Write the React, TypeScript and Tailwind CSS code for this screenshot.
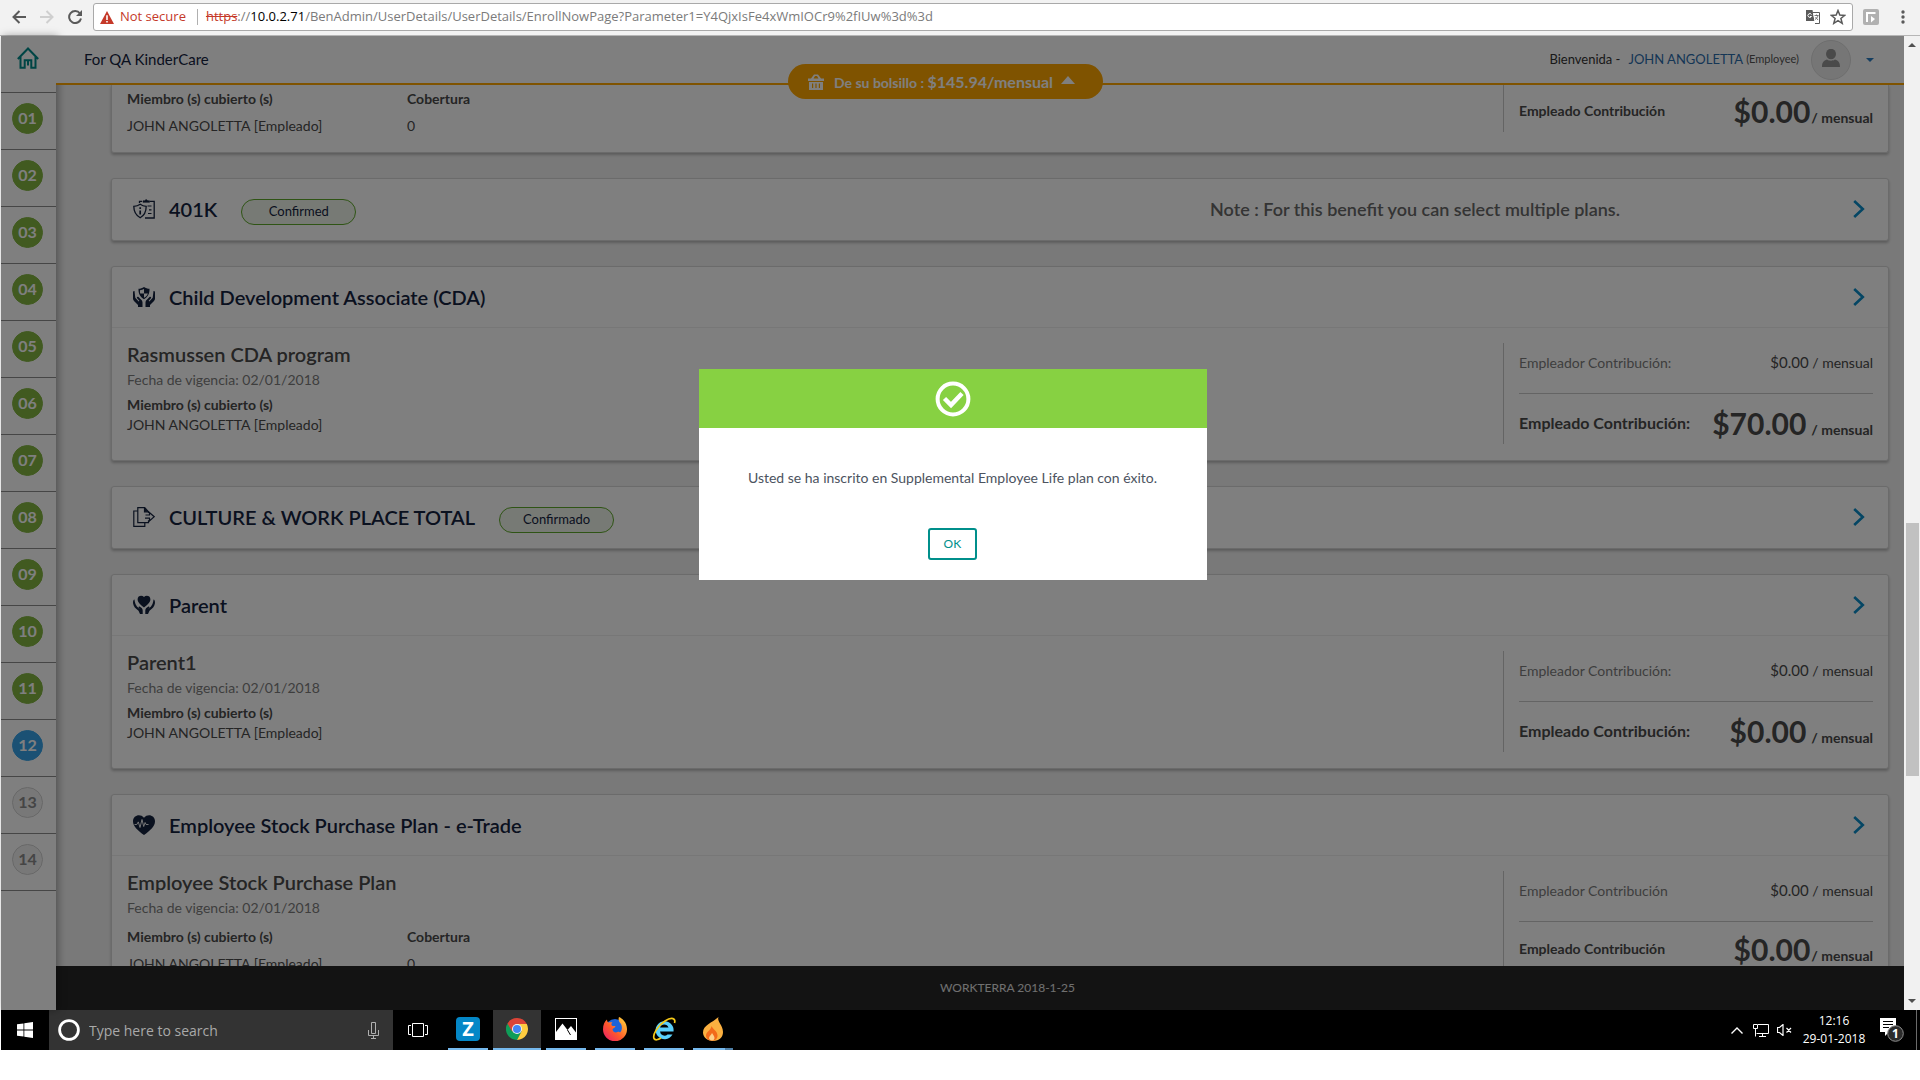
import React from "react";
import type { ReactNode } from "react";

type IconProps = { className?: string };

/* ---------- benefit icons ---------- */

function ClipboardShieldIcon({ className }: IconProps) {
  return (
    <svg viewBox="0 0 22 20" className={className} fill="none" stroke="currentColor" aria-hidden="true">
      <path d="M6.500 4V2.300H9M17 2.300h4.200v16.700H12" strokeWidth="1.300" />
      <path d="M10 1.800h1.500L13.200.4l1.700 1.400h1.600v1.500H10z" fill="currentColor" strokeWidth=".6" />
      <path d="M14.500 7h4M16 10.800h2.500M15 14.500h3.500" strokeWidth="1.200" />
      <path d="M7.200 5.300c2 1.500 4 2 6 2 0 5-1.500 9-6 11.400C2.700 16.300.8 12.300.8 7.300c2.500 0 4.400-.5 6.400-2z" strokeWidth="1.300" />
      <path d="M7.200 8.300v1.700M7.200 11.500v4" strokeWidth="1.700" />
    </svg>
  );
}

function ShieldHandsIcon({ className }: IconProps) {
  return (
    <svg viewBox="0 0 22 20" className={className} fill="currentColor" aria-hidden="true">
      <path d="M11 0c1.800 1.200 3.500 1.700 5.500 1.800.2 4.500-1.400 8.200-5.500 10.400C6.900 10 5.300 6.300 5.500 1.800 7.500 1.700 9.200 1.200 11 0z" />
      <path d="M11 2v4.500H7.200C7 5.500 6.900 4.300 7 3.200 8.500 3.100 9.800 2.700 11 2zM11 6.500h3.900c-.6 1.900-1.900 3.300-3.900 4.300z" fill="#fff" />
      <path d="M1.500 4C.4 3.900 0 4.600 0 5.500v6c0 1 .3 1.600 1 2.400L5 18v2h4.500v-4.500c0-1.300-.5-2-1.300-2.800L5.500 10c-1-.9-2.200.2-1.400 1.200l2.200 2.600-.6.6-3.400-3.600z" />
      <path d="M20.500 4c1.100-.1 1.500.6 1.500 1.500v6c0 1-.3 1.600-1 2.400L17 18v2h-4.500v-4.500c0-1.300.5-2 1.300-2.800l2.700-2.700c1-.9 2.200.2 1.400 1.200l-2.200 2.600.6.6 3.400-3.600z" />
    </svg>
  );
}

function HeartHandsIcon({ className }: IconProps) {
  return (
    <svg viewBox="0 0 22 20" className={className} fill="currentColor" aria-hidden="true">
      <path d="M11 12.500C7.500 9.800 4.600 7.500 4.600 4.300 4.600.6 9 0 11 2 13 0 17.400.6 17.400 4.300c0 3.200-2.900 5.500-6.400 8.200z" />
      <path d="M1.500 4.500C.2 4.800-.1 6.500.1 8.500c.4 3 2.400 5 5.400 7.300l1.500 3.200h2.700v-3.500c0-2-1.200-3-2.800-3.800-1.200-.6-1.800.6-1 1.300l1 .9C3.800 12 2 9.500 1.500 4.500z" />
      <path d="M20.500 4.500c1.300.3 1.600 2 1.400 4-.4 3-2.400 5-5.400 7.300L15 19h-2.700v-3.500c0-2 1.200-3 2.800-3.800 1.200-.6 1.800.6 1 1.300l-1 .9c3.100-1.900 4.900-4.400 5.400-9.400z" />
    </svg>
  );
}

function DocumentExportIcon({ className }: IconProps) {
  return (
    <svg viewBox="0 0 22 20" className={className} fill="none" stroke="currentColor" strokeWidth="1.200" aria-hidden="true">
      <path d="M15.500 6V4.700L11.700.7H4.800v15h10.700v-2.500" />
      <path d="M11.500.8v4h4" fill="currentColor" />
      <path d="M4.800 4H.8v15.300h11v-3.600" />
      <path d="M15 8h1.500V5.500l4.700 4.200-4.700 4.300v-2.800H12M12.500 8H15" />
    </svg>
  );
}

function HeartPulseIcon({ className }: IconProps) {
  return (
    <svg viewBox="0 0 22 20" className={className} aria-hidden="true">
      <path d="M11 20C5 15.500 0 11.500 0 6.200 0 0 7.500-1.800 11 2.700 14.500-1.800 22 0 22 6.200 22 11.500 17 15.500 11 20z" fill="currentColor" />
      <path d="M1.500 9.500h2.300l1.500-2.600 1.700 5.600 2-8 1.700 7 1.400-4 1 2h2.400" fill="none" stroke="#fff" strokeWidth=".9" />
    </svg>
  );
}

/* ---------- benefit cards ---------- */

function CardHeader({ icon, title, badge, note, divided }: { icon: ReactNode; title: string; badge?: string; note?: string; divided?: boolean }) {
  return (
    <header className={`flex h-[61px] items-center border-b pr-[23px] pl-[21px] ${divided ? "border-[#eeeeee]" : "border-transparent"}`}>
      <span className="text-[#15233f]">{icon}</span>
      <h2 className="ml-[14px] text-xl font-semibold text-[#15233f]">{title}</h2>
      {badge && (
        <span className="mt-[6px] ml-6 flex h-[26px] w-[115px] items-center justify-center rounded-full border border-[#5fa92a] bg-[#eef4ea] text-[13px] text-[#15233f]">
          {badge}
        </span>
      )}
      <span className="flex-1" />
      {note && <p className="mr-[233px] text-lg font-semibold text-[#686868]">{note}</p>}
      <button type="button" aria-label={`Open ${title}`} className="text-[#0a8cc8]">
        <svg viewBox="0 0 12 18" className="h-[18px] w-3" fill="none" stroke="currentColor" strokeWidth="2.600" aria-hidden="true">
          <path d="M1.200 1 9.800 9l-8.600 8" />
        </svg>
      </button>
    </header>
  );
}

const cardClass = "mb-[25px] rounded-[3px] border border-[#d6d6d6] bg-white shadow-[0_2px_3px_rgba(0,0,0,0.25)]";

function EmployeeRow({ label, amount, compact }: { label: string; amount: string; compact?: boolean }) {
  return (
    <div className={`flex h-[50px] items-center justify-between font-bold text-[#4a4a4a] ${compact ? "pt-1" : "pt-2"}`}>
      <span className={compact ? "text-sm" : "text-base"}>{label}</span>
      <span className={`flex items-baseline ${compact ? "gap-px" : "gap-[5px]"}`}>
        <span className="text-[30px] leading-9">{amount}</span>
        <span className="text-sm">/ mensual</span>
      </span>
    </div>
  );
}

function Contributions({ employer, amount, compact }: { employer: string; amount: string; compact?: boolean }) {
  return (
    <div className="mt-[15px] mb-1 w-[385px] shrink-0 self-start border-l border-[#c8c8c8] pr-[15px] pl-[15px]">
      <div className="flex h-[51px] items-center justify-between border-b border-[#c8c8c8] pb-[10px] text-sm">
        <span className="text-[#7d7d7d]">{compact ? "Empleador Contribución" : "Empleador Contribución:"}</span>
        <span className="text-[#4a4a4a]">
          <span className="text-[15px]">{employer}</span> / mensual
        </span>
      </div>
      <EmployeeRow label={compact ? "Empleado Contribución" : "Empleado Contribución:"} amount={amount} compact={compact} />
    </div>
  );
}

function MemberTable() {
  return (
    <table className="self-start text-left text-sm text-[#4a4a4a]">
      <thead>
        <tr className="h-[27px]">
          <th className="w-[280px] font-bold">Miembro (s) cubierto (s)</th>
          <th className="font-bold">Cobertura</th>
        </tr>
      </thead>
      <tbody>
        <tr className="h-[27px]">
          <td>JOHN ANGOLETTA [Empleado]</td>
          <td>0</td>
        </tr>
      </tbody>
    </table>
  );
}

function PlanCard({ icon, title, plan, amount, coverage }: { icon: ReactNode; title: string; plan: string; amount: string; coverage?: boolean }) {
  return (
    <section className={cardClass}>
      <CardHeader icon={icon} title={title} divided />
      <div className="flex justify-between pb-3 pl-[15px]">
        <div className="pt-3">
          <h3 className="text-xl leading-7 font-semibold text-[#4a4a4a]">{plan}</h3>
          <p className="text-sm leading-6 text-[#7d7d7d]">Fecha de vigencia: 02/01/2018</p>
          {coverage ? (
            <div className="mt-[3px]">
              <MemberTable />
            </div>
          ) : (
            <div className="mt-[3px] text-sm leading-5 text-[#4a4a4a]">
              <p className="font-bold">Miembro (s) cubierto (s)</p>
              <p>JOHN ANGOLETTA [Empleado]</p>
            </div>
          )}
        </div>
        <Contributions employer="$0.00" amount={amount} compact={coverage} />
      </div>
    </section>
  );
}

/* ---------- app chrome ---------- */

const steps = ["01", "02", "03", "04", "05", "06", "07", "08", "09", "10", "11", "12", "13", "14"];

function stepColors(n: number) {
  if (n < 12) return "border-[#82b441] bg-[#82b441] text-white";
  if (n === 12) return "border-[#36a3e8] bg-[#36a3e8] text-white";
  return "border-[#d0d0d0] bg-[#f1f1f1] text-[#8a8a8a]";
}

function Sidebar() {
  return (
    <nav aria-label="Pasos" className="z-10 w-[55px] shrink-0 bg-white shadow-[2px_0_8px_rgba(0,0,0,0.35)]">
      <a href="#home" aria-label="Inicio" className="flex h-[57px] items-center justify-center border-b border-[#8c8c8c] pr-[2px] pb-3">
        <svg viewBox="0 0 22 22" className="size-[22px] text-[#018a8a]" fill="none" stroke="currentColor" strokeWidth="2" aria-hidden="true">
          <path d="M.8 12 11 1.500 21.200 12M3.500 9.500v11.300h4.200v-7.500h6.600v7.500h4.200V9.500M11 13.500v5" />
        </svg>
      </a>
      {steps.map((step, i) => (
        <a key={step} href={`#step-${step}`} className="flex h-[57px] items-center justify-center border-b border-[#8c8c8c] pr-[2px] pb-[6px]">
          <span className={`flex size-[31px] items-center justify-center rounded-full border text-base font-bold ${stepColors(i + 1)}`}>{step}</span>
        </a>
      ))}
    </nav>
  );
}

function BasketIcon() {
  return (
    <svg viewBox="0 0 16 16" className="size-4" fill="currentColor" aria-hidden="true">
      <path d="M0 4.500h3L6 .5h4l3 4h3V7H0zM5.500 4.500h5L9 2H7z" fillRule="evenodd" />
      <path d="M1 8h14v8H1zM4 9.500v4.500h1.200V9.500zm3.400 0v4.500h1.200V9.500zm3.400 0v4.500H12V9.500z" fillRule="evenodd" />
    </svg>
  );
}

function Header() {
  return (
    <header className="relative z-10 flex h-[49px] shrink-0 items-center border-b-2 border-[#ffa600] bg-white pr-[30px] pl-7">
      <span className="flex-1 text-[15px] text-[#15233f]">For QA KinderCare</span>
      <button
        type="button"
        className="absolute top-7 right-[801px] flex h-[35px] w-[315px] items-center rounded-full bg-[#ffa600] pl-5 text-white"
      >
        <BasketIcon />
        <span className="ml-[10px] text-sm font-bold">
          De su bolsillo : <span className="text-base">$145.94/mensual</span>
        </span>
        <svg viewBox="0 0 14 8" className="mb-1 ml-2 h-2 w-[14px]" fill="currentColor" aria-hidden="true">
          <path d="M7 0l7 8H0z" />
        </svg>
      </button>
      <span className="text-[13px] text-[#333333]">Bienvenida -</span>
      <a href="#profile" className="ml-2 text-[13px] text-[#2b6cab]">
        JOHN ANGOLETTA
      </a>
      <span className="ml-[3px] text-[11px] text-[#555555]">(Employee)</span>
      <span className="ml-3 flex size-10 items-center justify-center rounded-full border border-[#dcdcdc] bg-[#ededed] text-[#959595]">
        <svg viewBox="0 0 18 18" className="mb-1 size-[18px]" fill="currentColor" aria-hidden="true">
          <ellipse cx="9" cy="5" rx="5" ry="5.200" />
          <path d="M0 18c0-4.500 1.500-6.500 5-7.500 2 1.600 6 1.600 8 0 3.500 1 5 3 5 7.500z" />
        </svg>
      </span>
      <button type="button" aria-label="Menú de usuario" className="ml-[15px] text-[#2b7cc0]">
        <svg viewBox="0 0 8 4" className="h-1 w-2" fill="currentColor" aria-hidden="true">
          <path d="M0 0h8L4 4z" />
        </svg>
      </button>
    </header>
  );
}

function BrowserBar() {
  return (
    <div className="flex h-9 shrink-0 items-center border-b border-[#b6b6b6] bg-[#f2f2f2] pb-px font-['Open_Sans',sans-serif]">
      <button type="button" aria-label="Back" className="ml-3 text-[#5a5a5a]">
        <svg viewBox="0 0 14 14" className="size-[14px]" fill="none" stroke="currentColor" strokeWidth="2" aria-hidden="true">
          <path d="M14 7H1.500M7.500 1l-6 6 6 6" />
        </svg>
      </button>
      <button type="button" aria-label="Forward" className="ml-[14px] text-[#cfcfcf]">
        <svg viewBox="0 0 14 14" className="size-[14px]" fill="none" stroke="currentColor" strokeWidth="2" aria-hidden="true">
          <path d="M0 7h12.500M6.500 1l6 6-6 6" />
        </svg>
      </button>
      <button type="button" aria-label="Reload" className="ml-[14px] text-[#5a5a5a]">
        <svg viewBox="0 0 14 14" className="size-[14px]" fill="none" stroke="currentColor" strokeWidth="2" aria-hidden="true">
          <path d="M12 3.500A6 6 0 1 0 13 8.500" />
          <path d="M14 0v6H8z" fill="currentColor" stroke="none" />
        </svg>
      </button>
      <div className="ml-[11px] flex h-7 flex-1 items-center rounded-[3px] border border-[#a9a9a9] bg-white pr-[6px] pl-[6px] text-[13px]">
        <svg viewBox="0 0 14 13" className="h-[13px] w-[14px]" aria-hidden="true">
          <path d="M7 0l7 13H0z" fill="#c53929" />
          <path d="M6.200 4.200h1.600V9H6.200zM6.200 10h1.600v1.600H6.200z" fill="#fff" />
        </svg>
        <span className="ml-[6px] text-[#c53929]">Not secure</span>
        <span className="mr-2 ml-[11px] h-4 w-px bg-[#b0b0b0]" />
        <span className="flex-1 whitespace-nowrap text-[#7b7b7b]">
          <span className="text-[#c53929] line-through">https</span>://<span className="text-black">10.0.2.71</span>
          /BenAdmin/UserDetails/UserDetails/EnrollNowPage?Parameter1=Y4QjxIsFe4xWmIOCr9%2fIUw%3d%3d
        </span>
        <svg viewBox="0 0 14 14" className="size-[14px]" aria-hidden="true">
          <path d="M0 0h6.500l2 11H0z" fill="#5a5a5a" />
          <path d="M7 2.500h6.500v11H9" fill="#fff" stroke="#5a5a5a" />
          <path d="M5.500 4.500a1.900 1.900 0 1 0 0 2H4" fill="none" stroke="#fff" />
          <path d="M8.500 5.500h4M10.500 4.500v1M12 5.500c-.5 2-1.500 3-3 4M9.500 7l2.500 3" fill="none" stroke="#5a5a5a" strokeWidth=".8" />
        </svg>
        <svg viewBox="0 0 16 16" className="ml-[10px] size-4" fill="none" stroke="#5a5a5a" strokeWidth="1.500" aria-hidden="true">
          <path d="M8 1.500l1.800 4.600 4.900.3-3.800 3.100 1.300 4.800L8 11.600l-4.200 2.700 1.300-4.800L1.300 6.400l4.900-.3z" />
        </svg>
      </div>
      <svg viewBox="0 0 16 16" className="ml-[10px] size-4" aria-hidden="true">
        <rect width="16" height="16" rx="2" fill="#b1b1b1" />
        <path d="M4 13V4h8.500" fill="none" stroke="#fff" strokeWidth="2" />
        <path d="M8 7l4 3-4 3.500z" fill="#fff" />
      </svg>
      <button type="button" aria-label="Menu" className="mr-[15px] ml-[22px] text-[#5a5a5a]">
        <svg viewBox="0 0 4 14" className="h-[14px] w-1" fill="currentColor" aria-hidden="true">
          <circle cx="2" cy="2" r="1.700" />
          <circle cx="2" cy="7" r="1.700" />
          <circle cx="2" cy="12" r="1.700" />
        </svg>
      </button>
    </div>
  );
}

function ScrollBar() {
  return (
    <div className="flex w-4 shrink-0 flex-col items-center bg-[#f1f1f1] py-[7px] text-[#505050]" aria-hidden="true">
      <svg viewBox="0 0 8 4" className="h-1 w-2" fill="currentColor">
        <path d="M4 0l4 4H0z" />
      </svg>
      <div className="flex w-full flex-1 flex-col items-center">
        <div className="flex-[476]" />
        <div className="w-[13px] flex-[253] bg-[#c1c1c1]" />
        <div className="flex-[223]" />
      </div>
      <svg viewBox="0 0 8 4" className="h-1 w-2" fill="currentColor">
        <path d="M0 0h8L4 4z" />
      </svg>
    </div>
  );
}

function SuccessDialog() {
  return (
    <div role="dialog" aria-modal="true" className="absolute inset-0 z-20 flex items-start justify-center bg-black/50 pt-[333px]">
      <div className="w-[508px] bg-white text-center">
        <div className="flex h-[59px] items-center justify-center bg-[#87d142]">
          <svg viewBox="0 0 36 36" className="size-9" fill="none" stroke="#fff" aria-hidden="true">
            <circle cx="18" cy="18" r="15.400" strokeWidth="4" />
            <path d="M9.500 17.500l6.500 6.500L27 12.500" strokeWidth="4.500" />
          </svg>
        </div>
        <p className="pt-10 text-sm leading-5 text-[#4c5360]">Usted se ha inscrito en Supplemental Employee Life plan con éxito.</p>
        <button type="button" className="mt-10 mb-5 h-8 w-[49px] rounded-[3px] border-2 border-[#008f8b] text-xs tracking-wide text-[#008f8b]">
          OK
        </button>
      </div>
    </div>
  );
}

/* ---------- taskbar ---------- */

function ZIcon() {
  return (
    <span className="flex size-6 items-center justify-center rounded-[4px] bg-[#0487c7] font-['Open_Sans',sans-serif] text-xl leading-none font-bold text-white">Z</span>
  );
}

function ChromeIcon() {
  return (
    <svg viewBox="0 0 22 22" className="size-[22px]" aria-hidden="true">
      <path d="M11 11l4.700 2.700L11 22A11 11 0 0 1 1.470 5.500z" fill="#0f9d58" />
      <path d="M11 6h9.800a11 11 0 0 1-9.800 16l4.500-8.500z" fill="#ffcd40" />
      <path d="M1.470 5.500a11 11 0 0 1 19.320.500H11L6.200 13.700z" fill="#db4437" />
      <circle cx="11" cy="11" r="5" fill="#f1f1f1" />
      <circle cx="11" cy="11" r="4" fill="#4285f4" />
    </svg>
  );
}

function PhotosIcon() {
  return (
    <svg viewBox="0 0 22 22" className="size-[22px]" aria-hidden="true">
      <rect x=".5" y=".5" width="21" height="21" fill="#000" stroke="#fff" />
      <path d="M1 14 7.500 5.500l5 6.500 3.500-4 5 6.500V21H1z" fill="#fff" />
      <path d="M12.500 12l3 5" stroke="#000" />
    </svg>
  );
}

function FirefoxIcon() {
  return (
    <svg viewBox="0 0 24 24" className="size-6" aria-hidden="true">
      <defs>
        <linearGradient id="fox" x1="0" y1="1" x2="1" y2="0">
          <stop offset="0" stopColor="#e6156f" />
          <stop offset=".45" stopColor="#ff5a2a" />
          <stop offset="1" stopColor="#ffe23c" />
        </linearGradient>
      </defs>
      <circle cx="12" cy="11.500" r="9.500" fill="#1c63d8" />
      <path d="M16 0c3 1 8 5.500 8 12a12 12 0 0 1-24 .5C0 8 1.500 4.500 4 2.500c0 1.500.5 2.500 1.500 3C7 5 8.500 5 9.500 5.500 8 6.500 8 8 9.500 9h3c-.5 2-2.500 2-3 3.500.5 2.500 3 3.500 5 2.500 1-.5 2-.5 2.500.5 2-2 2.500-5.500 1-8.500C16 5 15 2.500 16 0z" fill="url(#fox)" />
    </svg>
  );
}

function ExplorerIcon() {
  return (
    <svg viewBox="0 0 24 24" className="size-6" aria-hidden="true">
      <path d="M21.500 14.500a9 9 0 1 0-1 3h-5a4.500 4.500 0 0 1-7.500-3zM8 10.500a4.500 4.500 0 0 1 8.500 0z" fill="#5bd0fb" fillRule="evenodd" />
      <path d="M22.500 6C24 1.500 20-.5 13 4 5.500 9 .5 17.500 2 21.500c1 2 4 1.500 7-.5" fill="none" stroke="#f6c917" strokeWidth="1.700" />
    </svg>
  );
}

function FlameIcon() {
  return (
    <svg viewBox="0 0 20 24" className="h-6 w-5" aria-hidden="true">
      <path d="M15.500 0c-2 4 4.500 8 4.500 15 0 5.500-4 9-9.500 9S0 20.500 0 15.500C0 8 9 6 15.500 0z" fill="#fbb040" />
      <path d="M8.500 9c1 3 6 5 6 9.500 0 3-2 5-5.500 5s-6-2-6-5c0-4 5-5 5.500-9.500z" fill="#f26a1b" />
      <path d="M9 16c1 2 2.500 3 2.500 5 0 1.500-1 2.500-2.500 2.500S6 22.500 6 21c0-2 2.500-3 3-5z" fill="#fdd08a" />
    </svg>
  );
}

const apps = [
  { name: "Z", icon: <ZIcon /> },
  { name: "Chrome", icon: <ChromeIcon />, active: true },
  { name: "Photos", icon: <PhotosIcon /> },
  { name: "Firefox", icon: <FirefoxIcon /> },
  { name: "Internet Explorer", icon: <ExplorerIcon /> },
  { name: "Flame", icon: <FlameIcon />, stacked: true },
];

function Taskbar() {
  return (
    <footer className="ml-px flex h-10 shrink-0 items-center bg-black pr-[3px] font-['Open_Sans',sans-serif] text-white">
      <button type="button" aria-label="Start" className="flex w-12 items-center justify-center">
        <svg viewBox="0 0 16 16" className="size-4" fill="currentColor" aria-hidden="true">
          <path d="M0 2.300 6.500 1.400v6.200H0zM7.300 1.300 16 0v7.600H7.300zM0 8.400h6.500v6.200L0 13.700zM7.300 8.400H16V16l-8.700-1.300z" />
        </svg>
      </button>
      <label className="flex h-10 w-[344px] items-center bg-[#333333] pr-[14px] pl-[9px]">
        <svg viewBox="0 0 22 22" className="size-[22px] shrink-0" fill="none" stroke="#fff" strokeWidth="2.800" aria-hidden="true">
          <circle cx="11" cy="11" r="9.400" />
        </svg>
        <input
          type="text"
          aria-label="Type here to search"
          placeholder="Type here to search"
          className="ml-[9px] w-full min-w-0 bg-transparent text-[14px] outline-none placeholder:text-[#a9a9a9]"
        />
        <svg viewBox="0 0 11 17" className="h-[17px] w-[11px] shrink-0" fill="none" stroke="#b0b0b0" aria-hidden="true">
          <path d="M3.500.5h4v11h-4zM.5 8v5.500h10V8M5.500 13.500v3M3 16.500h5" />
        </svg>
      </label>
      <button type="button" aria-label="Task view" className="flex w-[51px] items-center justify-center pr-px">
        <svg viewBox="0 0 20 14" className="h-[14px] w-5" fill="none" stroke="currentColor" aria-hidden="true">
          <path d="M4.500.5h11v13h-11zM3 2.500H.5v9H3M17 2.500h2.500v9H17" />
        </svg>
      </button>
      <div className="flex gap-px">
        {apps.map((app) => (
          <button
            key={app.name}
            type="button"
            aria-label={app.name}
            className={`flex h-10 w-12 flex-col items-center ${app.active ? "bg-[#333333]" : ""}`}
          >
            <span className="flex flex-1 items-center">{app.icon}</span>
            <span className={`flex h-[2px] justify-end bg-[#76b9ed] ${app.active ? "w-12" : "w-10"}`}>
              {app.stacked && <span className="h-[2px] w-2 bg-[#4f80a8]" />}
            </span>
          </button>
        ))}
      </div>
      <div className="ml-auto flex h-10 items-center">
        <svg viewBox="0 0 12 7" className="h-[7px] w-3" fill="none" stroke="currentColor" strokeWidth="1.400" aria-hidden="true">
          <path d="M.5 6.500 6 1l5.500 5.500" />
        </svg>
        <svg viewBox="0 0 16 14" className="ml-[10px] h-[14px] w-4" fill="none" stroke="currentColor" aria-hidden="true">
          <path d="M5 1.500h10.500v9H3.500M.5 1.500h4v4h-4zM2.500 5.500v8M6 13.500h7M9.500 10.500v3" />
        </svg>
        <svg viewBox="0 0 15 12" className="ml-2 h-3 w-[15px]" fill="none" stroke="currentColor" strokeWidth="1.200" aria-hidden="true">
          <path d="M.5 3.500h2L6 .5v11l-3.500-3h-2zM9.500 4l4.500 4.500M14 4 9.500 8.500" />
        </svg>
        <div className="ml-[10px] w-16 text-center text-xs leading-[18px] whitespace-nowrap">
          <div>12:16</div>
          <div>29-01-2018</div>
        </div>
        <button type="button" aria-label="Notifications" className="relative ml-[14px] h-6 w-6">
          <svg viewBox="0 0 24 24" className="size-6" aria-hidden="true">
            <path d="M0 0h16v14H9l-4 4v-4H0z" fill="#fff" />
            <path d="M3 3.500h10M3 6.500h10M3 9.500h6" stroke="#000" />
            <circle cx="15.500" cy="15.500" r="7.800" fill="#2b2b2b" stroke="#8d8d8d" />
          </svg>
          <span className="absolute right-0 bottom-0 w-[17px] text-center text-xs leading-[17px] font-bold">1</span>
        </button>
        <span className="ml-3 h-10 w-px bg-[#6a6a6a]" />
      </div>
    </footer>
  );
}

export default function App() {
  const icon = "h-5 w-[22px]";
  return (
    <div className="flex h-screen flex-col overflow-hidden bg-white pb-[30px] font-['Lato',sans-serif]">
      <BrowserBar />
      <div className="flex min-h-0 flex-1">
        <div className="relative ml-px flex min-w-0 flex-1">
          <Sidebar />
          <div className="flex min-w-0 flex-1 flex-col">
            <Header />
            <main className="min-h-0 flex-1 overflow-hidden bg-[#f3f3f3] pr-[15px] pl-[55px]">
              <section className={`${cardClass} flex h-[68px] justify-between rounded-t-none border-t-0 pl-[15px]`}>
                <MemberTable />
                <div className="flex h-[47px] w-[385px] shrink-0 flex-col border-l border-[#c8c8c8] pr-[15px] pl-[15px]">
                  <EmployeeRow label="Empleado Contribución" amount="$0.00" compact />
                </div>
              </section>
              <section className={cardClass}>
                <CardHeader icon={<ClipboardShieldIcon className={icon} />} title="401K" badge="Confirmed" note="Note : For this benefit you can select multiple plans." />
              </section>
              <PlanCard icon={<ShieldHandsIcon className={icon} />} title="Child Development Associate (CDA)" plan="Rasmussen CDA program" amount="$70.00" />
              <section className={cardClass}>
                <CardHeader icon={<DocumentExportIcon className={icon} />} title="CULTURE & WORK PLACE TOTAL" badge="Confirmado" />
              </section>
              <PlanCard icon={<HeartHandsIcon className={icon} />} title="Parent" plan="Parent1" amount="$0.00" />
              <PlanCard icon={<HeartPulseIcon className={icon} />} title="Employee Stock Purchase Plan - e-Trade" plan="Employee Stock Purchase Plan" amount="$0.00" coverage />
            </main>
            <footer className="flex h-11 shrink-0 items-center justify-center bg-[#262626] pl-[55px] text-xs text-[#e0e0e0]">WORKTERRA 2018-1-25</footer>
          </div>
          <SuccessDialog />
        </div>
        <ScrollBar />
      </div>
      <Taskbar />
    </div>
  );
}
